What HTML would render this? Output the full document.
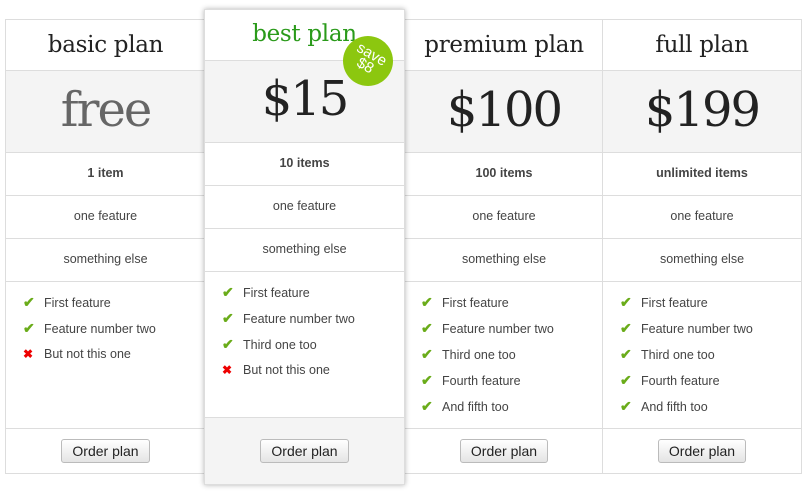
<!DOCTYPE html><html><head><meta charset="utf-8"><style>
body{margin:0;width:807px;height:493px;background:#fff;position:relative;overflow:hidden;font-family:"Liberation Sans",Arial,sans-serif;color:#444}
.col{position:absolute;box-sizing:border-box;border:1px solid #ddd;background:#fff}
.r{position:absolute;left:0;right:0;border-bottom:1px solid #ddd;text-align:center;box-sizing:border-box}
.h{font-family:"DejaVu Serif","Liberation Serif",serif;font-size:23px;color:#222;letter-spacing:-0.3px}
.p{background:#f4f4f4;font-family:"DejaVu Serif","Liberation Serif",serif;font-size:48px;color:#222;letter-spacing:-2px}
.t{font-size:12.5px;color:#444}
ul{list-style:none;margin:0;padding:0;text-align:left;position:absolute;left:17px;top:12px}
li{font-size:12.5px;height:26px;line-height:16px;color:#444}
li b{display:inline-block;width:21px;font-weight:bold;font-size:14px}
.ok{color:#6aac1a}.no{color:#e00;font-size:12px}
.btn{display:inline-block;font-size:14px;color:#222;border:1px solid #bbb;border-radius:3px;background:linear-gradient(#fff,#e4e4e4);padding:3px 10px;line-height:16px}
</style></head><body>

<div class="col" style="left:5px;top:19px;width:200px;height:455px;border-right:none">
<div class="r h" style="top:0;height:51px;line-height:51px">basic plan</div>
<div class="r p" style="top:51px;height:82px;line-height:78px;color:#666">free</div>
<div class="r t" style="top:133px;height:43px;line-height:41px;font-weight:bold">1 item</div>
<div class="r t" style="top:176px;height:43px;line-height:41px">one feature</div>
<div class="r t" style="top:219px;height:43px;line-height:41px">something else</div>
<div class="r" style="top:262px;height:147px"><ul><li><b class="ok">✔</b>First feature</li><li><b class="ok">✔</b>Feature number two</li><li><b class="no">✖</b>But not this one</li></ul></div>
<div class="r" style="top:409px;height:44px;border:none;padding-top:10px"><span class="btn">Order plan</span></div>
</div>

<div class="col" style="left:404px;top:19px;width:200px;height:455px;border-left:none;border-right:none">
<div class="r h" style="top:0;height:51px;line-height:51px">premium plan</div>
<div class="r p" style="top:51px;height:82px;line-height:78px">$100</div>
<div class="r t" style="top:133px;height:43px;line-height:41px;font-weight:bold">100 items</div>
<div class="r t" style="top:176px;height:43px;line-height:41px">one feature</div>
<div class="r t" style="top:219px;height:43px;line-height:41px">something else</div>
<div class="r" style="top:262px;height:147px"><ul><li><b class="ok">✔</b>First feature</li><li><b class="ok">✔</b>Feature number two</li><li><b class="ok">✔</b>Third one too</li><li><b class="ok">✔</b>Fourth feature</li><li><b class="ok">✔</b>And fifth too</li></ul></div>
<div class="r" style="top:409px;height:44px;border:none;padding-top:10px"><span class="btn">Order plan</span></div>
</div>

<div class="col" style="left:602px;top:19px;width:200px;height:455px">
<div class="r h" style="top:0;height:51px;line-height:51px">full plan</div>
<div class="r p" style="top:51px;height:82px;line-height:78px">$199</div>
<div class="r t" style="top:133px;height:43px;line-height:41px;font-weight:bold">unlimited items</div>
<div class="r t" style="top:176px;height:43px;line-height:41px">one feature</div>
<div class="r t" style="top:219px;height:43px;line-height:41px">something else</div>
<div class="r" style="top:262px;height:147px"><ul><li><b class="ok">✔</b>First feature</li><li><b class="ok">✔</b>Feature number two</li><li><b class="ok">✔</b>Third one too</li><li><b class="ok">✔</b>Fourth feature</li><li><b class="ok">✔</b>And fifth too</li></ul></div>
<div class="r" style="top:409px;height:44px;border:none;padding-top:10px"><span class="btn">Order plan</span></div>
</div>

<div class="col" style="left:204px;top:9px;width:201px;height:476px;box-shadow:0 0 5px rgba(0,0,0,.3);z-index:2">
<div class="r h" style="top:0;height:51px;line-height:48px;color:#2a9a1a">best plan</div>
<div class="r p" style="top:51px;height:82px;line-height:76px">$15</div>
<div class="r t" style="top:133px;height:43px;line-height:41px;font-weight:bold">10 items</div>
<div class="r t" style="top:176px;height:43px;line-height:41px">one feature</div>
<div class="r t" style="top:219px;height:43px;line-height:41px">something else</div>
<div class="r" style="top:262px;height:146px"><ul><li><b class="ok">✔</b>First feature</li><li><b class="ok">✔</b>Feature number two</li><li><b class="ok">✔</b>Third one too</li><li><b class="no">✖</b>But not this one</li></ul></div>
<div class="r" style="top:408px;height:66px;border:none;background:#f4f4f4;padding-top:21px"><span class="btn">Order plan</span></div>
<div style="position:absolute;left:138px;top:26px;width:50px;height:50px;border-radius:50%;background:#8cc70f;color:#fff;font-size:15px;line-height:13px;text-align:center;transform:rotate(30deg);padding-top:11px;box-sizing:border-box">save<br>$8</div>
</div>
</body></html>
